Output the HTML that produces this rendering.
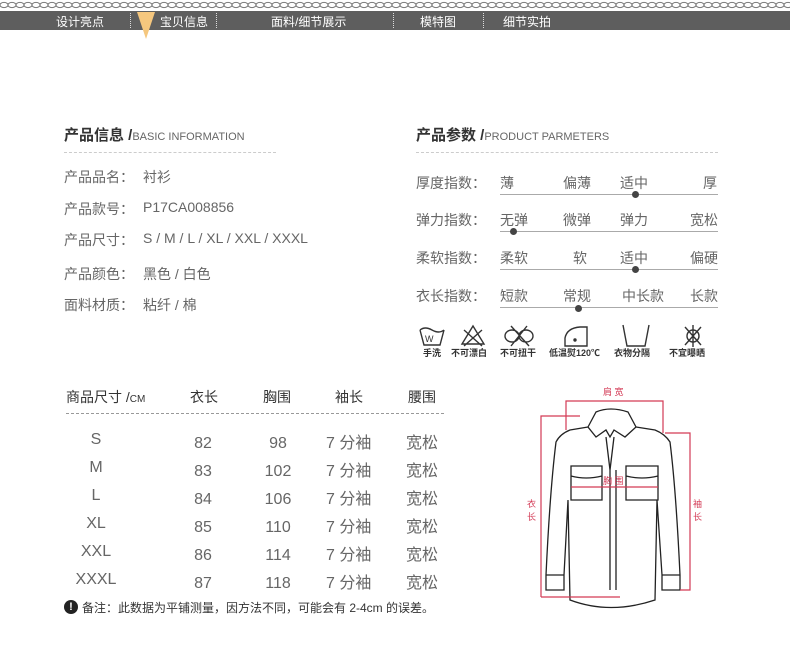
<!DOCTYPE html>
<html><head><meta charset="utf-8"><style>
body{margin:0;width:790px;height:665px;background:#fff;position:relative;overflow:hidden;font-family:"Liberation Sans","Noto Sans CJK SC",sans-serif;color:#666}
.a{position:absolute;white-space:nowrap}
.t{font-size:14px}
.h{font-size:15px;font-weight:bold;color:#333}
.h span{font-size:11px;font-weight:normal;color:#666}
.nav{position:absolute;left:0;top:11px;width:790px;height:19px;background:#5e5e5e}
.nav div{position:absolute;top:2px;color:#fff;font-size:12px}
.sep{position:absolute;top:2px;width:0;height:15px;border-left:1px dotted #ddd}
.line{position:absolute;height:0;border-top:1px solid #aaa}
.dot{position:absolute;width:7px;height:7px;border-radius:50%;background:#444}
.ic{position:absolute;top:346px;font-size:9px;color:#333;font-weight:bold}
</style></head><body>
<svg class="a" style="left:0;top:0" width="790" height="10"><defs><pattern id="p" width="8" height="10" patternUnits="userSpaceOnUse"><ellipse cx="4" cy="5" rx="4" ry="2.6" fill="none" stroke="#777" stroke-width="1"/></pattern></defs><rect width="790" height="10" fill="url(#p)"/></svg>
<div class="nav">
<div style="left:56px">设计亮点</div><span class="sep" style="left:130px"></span>
<div style="left:160px">宝贝信息</div><span class="sep" style="left:216px"></span>
<div style="left:271px">面料/细节展示</div><span class="sep" style="left:393px"></span>
<div style="left:420px">模特图</div><span class="sep" style="left:483px"></span>
<div style="left:503px">细节实拍</div>
</div>
<svg class="a" style="left:137px;top:12px" width="20" height="28"><polygon points="0,0 18,0 9,27" fill="#f5c77e"/></svg>

<div class="a h" style="left:64px;top:124px">产品信息 /<span>BASIC INFORMATION</span></div>
<div class="a" style="left:64px;top:152px;width:212px;border-top:1px dashed #ccc"></div>
<div class="a t" style="left:64px;top:167px">产品品名：</div><div class="a t" style="left:143px;top:167px">衬衫</div>
<div class="a t" style="left:64px;top:199px">产品款号：</div><div class="a t" style="left:143px;top:199px">P17CA008856</div>
<div class="a t" style="left:64px;top:230px">产品尺寸：</div><div class="a t" style="left:143px;top:230px">S / M / L / XL / XXL / XXXL</div>
<div class="a t" style="left:64px;top:264px">产品颜色：</div><div class="a t" style="left:143px;top:264px">黑色 / 白色</div>
<div class="a t" style="left:64px;top:295px">面料材质：</div><div class="a t" style="left:143px;top:295px">粘纤 / 棉</div>

<div class="a h" style="left:416px;top:124px">产品参数 /<span>PRODUCT PARMETERS</span></div>
<div class="a" style="left:416px;top:152px;width:302px;border-top:1px dashed #ccc"></div>
<div class="a t" style="left:416px;top:173px">厚度指数：</div>
<div class="a t" style="left:500px;top:173px">薄</div><div class="a t" style="left:563px;top:173px">偏薄</div><div class="a t" style="left:620px;top:173px">适中</div><div class="a t" style="left:703px;top:173px">厚</div>
<div class="line" style="left:500px;top:194px;width:218px"></div><div class="dot" style="left:632px;top:191px"></div>
<div class="a t" style="left:416px;top:210px">弹力指数：</div>
<div class="a t" style="left:500px;top:210px">无弹</div><div class="a t" style="left:563px;top:210px">微弹</div><div class="a t" style="left:620px;top:210px">弹力</div><div class="a t" style="left:690px;top:210px">宽松</div>
<div class="line" style="left:500px;top:231px;width:218px"></div><div class="dot" style="left:510px;top:228px"></div>
<div class="a t" style="left:416px;top:248px">柔软指数：</div>
<div class="a t" style="left:500px;top:248px">柔软</div><div class="a t" style="left:573px;top:248px">软</div><div class="a t" style="left:620px;top:248px">适中</div><div class="a t" style="left:690px;top:248px">偏硬</div>
<div class="line" style="left:500px;top:269px;width:218px"></div><div class="dot" style="left:632px;top:266px"></div>
<div class="a t" style="left:416px;top:286px">衣长指数：</div>
<div class="a t" style="left:500px;top:286px">短款</div><div class="a t" style="left:563px;top:286px">常规</div><div class="a t" style="left:622px;top:286px">中长款</div><div class="a t" style="left:690px;top:286px">长款</div>
<div class="line" style="left:500px;top:307px;width:218px"></div><div class="dot" style="left:575px;top:305px"></div>

<svg class="a" style="left:415px;top:322px" width="310" height="26" fill="none" stroke="#333" stroke-width="1.4">
<path d="M5 8 L9 23 H25 L29 8 M5 8 Q10 4 17 8 Q24 12 29 8"/><text x="10" y="20" font-size="9" fill="#333" stroke="none">W</text>
<path d="M47 22 L58 4 L69 22 Z M49 8 L67 24 M67 8 L49 24"/>
<path d="M90 14 a7 6 0 1 1 14 0 a7 6 0 1 1 14 0 a7 6 0 1 1 -14 0 a7 6 0 1 1 -14 0 M96 4 L114 24 M112 4 L96 24"/>
<path d="M150 24 V16 Q152 6 165 5 H172 V24 Z"/><circle cx="160" cy="18" r="1" fill="#333"/>
<path d="M208 3 L212 24 H230 L234 3"/>
<circle cx="278" cy="14" r="6"/><path d="M270 5 L286 23 M286 5 L270 23 M278 3 V25"/>
</svg>
<div class="ic" style="left:423px">手洗</div>
<div class="ic" style="left:451px">不可漂白</div>
<div class="ic" style="left:500px">不可扭干</div>
<div class="ic" style="left:549px">低温熨120℃</div>
<div class="ic" style="left:614px">衣物分隔</div>
<div class="ic" style="left:669px">不宜曝晒</div>

<div class="a t" style="left:66px;top:387px;color:#333">商品尺寸 /<span style="font-size:10px">CM</span></div>
<div class="a t" style="left:190px;top:387px;color:#333">衣长</div>
<div class="a t" style="left:263px;top:387px;color:#333">胸围</div>
<div class="a t" style="left:335px;top:387px;color:#333">袖长</div>
<div class="a t" style="left:408px;top:387px;color:#333">腰围</div>
<div class="a" style="left:66px;top:413px;width:378px;border-top:1px dashed #999"></div>
<div class="a" style="left:66px;top:426px;width:60px;font-size:16px;line-height:28px;text-align:center">S<br>M<br>L<br>XL<br>XXL<br>XXXL</div>
<div class="a" style="left:180px;top:430px;width:46px;font-size:16px;line-height:28px;text-align:center">82<br>83<br>84<br>85<br>86<br>87</div>
<div class="a" style="left:255px;top:430px;width:46px;font-size:16px;line-height:28px;text-align:center">98<br>102<br>106<br>110<br>114<br>118</div>
<div class="a" style="left:326px;top:430px;font-size:16px;line-height:28px">7 分袖<br>7 分袖<br>7 分袖<br>7 分袖<br>7 分袖<br>7 分袖</div>
<div class="a" style="left:406px;top:430px;font-size:16px;line-height:28px">宽松<br>宽松<br>宽松<br>宽松<br>宽松<br>宽松</div>
<div class="a" style="left:64px;top:600px;width:14px;height:14px;border-radius:50%;background:#222;color:#fff;font-size:11px;font-weight:bold;text-align:center;line-height:14px">!</div>
<div class="a" style="left:82px;top:599px;font-size:12px;color:#333">备注：此数据为平铺测量，因方法不同，可能会有 2-4cm 的误差。</div>

<svg class="a" style="left:510px;top:380px" width="210" height="240" fill="none" stroke="#222" stroke-width="1.3">
<path d="M86 32 Q100 26 118 32 L126 47 L115 57 L104 50 L100 57 L96 50 L86 57 L78 47 Z"/>
<path d="M78 47 L60 50 Q50 54 46 62 Q40 110 36 195 L36 210 L54 210 L54 195 L58 120 L60 220 Q100 235 145 220 L147 120 L152 195 L152 210 L170 210 L170 195 Q166 110 160 62 Q155 54 145 50 L126 47"/>
<path d="M96 57 L100 90 L104 57 M100 90 V210 M106 90 V210"/>
<path d="M61 86 H92 V120 H61 Z M61 96 Q76 100 92 96 M116 86 H148 V120 H116 Z M116 96 Q132 100 148 96"/>
<path d="M36 195 H54 M152 195 H170"/>
<g stroke="#d33a55" stroke-width="1.2"><path d="M56 50 V21 H153 V53"/><path d="M61 107 H148"/><path d="M31 217 V36 H70 M31 217 H110"/><path d="M155 53 H180 V210 H170"/></g>
<g fill="#d33a55" stroke="none" font-size="9"><text x="93" y="15">肩 宽</text><text x="93" y="104">胸 围</text><text x="17" y="127">衣</text><text x="17" y="140">长</text><text x="183" y="127">袖</text><text x="183" y="140">长</text></g>
</svg>
</body></html>
